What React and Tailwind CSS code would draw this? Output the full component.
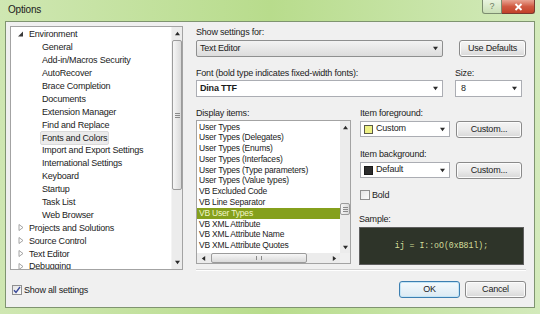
import React from 'react'

const treeItems = [
  { label: 'Environment', level: 0, open: true },
  { label: 'General', level: 1 },
  { label: 'Add-in/Macros Security', level: 1 },
  { label: 'AutoRecover', level: 1 },
  { label: 'Brace Completion', level: 1 },
  { label: 'Documents', level: 1 },
  { label: 'Extension Manager', level: 1 },
  { label: 'Find and Replace', level: 1 },
  { label: 'Fonts and Colors', level: 1, selected: true },
  { label: 'Import and Export Settings', level: 1 },
  { label: 'International Settings', level: 1 },
  { label: 'Keyboard', level: 1 },
  { label: 'Startup', level: 1 },
  { label: 'Task List', level: 1 },
  { label: 'Web Browser', level: 1 },
  { label: 'Projects and Solutions', level: 0 },
  { label: 'Source Control', level: 0 },
  { label: 'Text Editor', level: 0 },
  { label: 'Debugging', level: 0 },
]

const displayItems = [
  'User Types',
  'User Types (Delegates)',
  'User Types (Enums)',
  'User Types (Interfaces)',
  'User Types (Type parameters)',
  'User Types (Value types)',
  'VB Excluded Code',
  'VB Line Separator',
  'VB User Types',
  'VB XML Attribute',
  'VB XML Attribute Name',
  'VB XML Attribute Quotes',
]

const Arrow = ({ dir = 'down', size = 5, color = '#2b2b2b' }) => {
  const pts = {
    down: '0,1 6,1 3,5',
    up: '0,5 6,5 3,1',
    left: '5,0 5,6 1,3',
    right: '1,0 1,6 5,3',
  }
  return (
    <svg width={size} height={size} viewBox="0 0 6 6">
      <polygon points={pts[dir]} fill={color} />
    </svg>
  )
}

const Expander = ({ open }) =>
  open ? (
    <svg width="6" height="6" viewBox="0 0 6 6">
      <polygon points="5,0.5 5,5.5 0,5.5" fill="#3a3a3a" />
    </svg>
  ) : (
    <svg width="6" height="7" viewBox="0 0 6 7">
      <polygon points="1,0.5 5,3.5 1,6.5" fill="none" stroke="#9a9a9a" strokeWidth="0.9" />
    </svg>
  )

const Thumb = ({ className = '', horizontal = false }) => (
  <div
    className={`border border-[#9b9b9b] rounded-[2px] flex items-center justify-center ${
      horizontal
        ? 'bg-linear-to-b from-[#f6f6f6] to-[#dadada]'
        : 'bg-linear-to-r from-[#f6f6f6] to-[#dadada]'
    } ${className}`}
  >
    {horizontal ? (
      <div className="w-[6px] h-[4px] border-x border-[#8a8a8a]" />
    ) : (
      <div className="w-[5px] h-[5px] flex flex-col justify-between">
        <div className="h-px bg-[#8a8a8a]" />
        <div className="h-px bg-[#8a8a8a]" />
        <div className="h-px bg-[#8a8a8a]" />
      </div>
    )}
  </div>
)

const Button = ({ children, width, focused = false }) => (
  <div
    className={`h-[17px] ${width} rounded-[3px] border flex items-center justify-center text-[#1b1b1b] ${
      focused
        ? 'border-[#3c7fb1] bg-linear-to-b from-[#f4fafd] to-[#dbeaf3] shadow-[inset_0_0_0_1px_#c4e5f6]'
        : 'border-[#8a8a8a] bg-linear-to-b from-[#f4f4f4] via-[#ebebeb] to-[#d8d8d8] shadow-[inset_0_0_0_1px_#fcfcfc]'
    }`}
  >
    {children}
  </div>
)

const Combo = ({ children, width, height = 'h-[17px]', plain = false }) => (
  <div
    className={`${height} ${width} border flex items-center justify-between pl-[3px] pr-[4px] ${
      plain
        ? 'border-[#abadb3] bg-white'
        : 'border-[#8e8f8f] rounded-[2px] bg-linear-to-b from-[#f3f3f3] to-[#dcdcdc]'
    }`}
  >
    <div className="flex items-center gap-[3px] text-[#1b1b1b]">{children}</div>
    <Arrow dir="down" />
  </div>
)

const CheckBox = ({ checked }) => (
  <div className="w-[10px] h-[10px] border border-[#8f8f8f] bg-linear-to-br from-[#e4e4e4] to-[#fbfbfb] flex items-center justify-center">
    {checked && (
      <svg width="8" height="8" viewBox="0 0 8 8">
        <path d="M1 4.2 L3 6.5 L7 1" fill="none" stroke="#3a4a9a" strokeWidth="1.4" />
      </svg>
    )}
  </div>
)

export default function App() {
  return (
    <div className="w-[540px] h-[314px] flex flex-col overflow-hidden bg-linear-to-r from-[#cfe7b2] via-[#b8dc8c] to-[#d3eabb] font-['Liberation_Sans',Arial,sans-serif] text-[9px] tracking-[-0.2px] text-[#1b1b1b]">
      {/* title bar */}
      <div className="h-[21px] flex items-start justify-between pl-[8px] pr-[5px]">
        <div className="pt-[4px] leading-[12px] text-[10px] text-[#1a1a1a]">Options</div>
        <div className="flex">
          <div className="w-[20px] h-[14px] rounded-bl-[3px] border border-t-0 border-[#7c8c70] bg-linear-to-b from-[#e9f3df] to-[#c9dfb6] flex items-center justify-center text-[#6c7a62] text-[9px]">
            ?
          </div>
          <div className="w-[33px] h-[14px] rounded-br-[3px] border border-t-0 border-l-0 border-[#7a3a30] bg-linear-to-b from-[#e8a493] via-[#d05a42] to-[#c24128] flex items-center justify-center">
            <svg width="9" height="8" viewBox="0 0 9 8">
              <path d="M1.5 1 L7.5 7 M7.5 1 L1.5 7" stroke="white" strokeWidth="1.8" />
            </svg>
          </div>
        </div>
      </div>

      {/* client area */}
      <div className="mx-[5px] h-[287px] border border-[#7f9470] bg-[#f0f0f0] pt-[4px] pl-[4px] pr-[8px]">
        <div className="flex h-[244px]">
          {/* tree */}
          <div className="w-[173px] h-full border border-[#a3a3a3] bg-white flex">
            <div className="flex-1 overflow-hidden pt-[1px]">
              {treeItems.map((item) => (
                <div
                  key={item.label}
                  className={`h-[12.9px] flex items-center whitespace-nowrap ${
                    item.level === 0 ? 'pl-[7px]' : 'pl-[31px]'
                  }`}
                >
                  {item.level === 0 && (
                    <div className="w-[6px] mr-[5px] flex items-center">
                      <Expander open={item.open} />
                    </div>
                  )}
                  <span
                    className={`leading-[12px] ${
                      item.selected ? 'bg-[#ebebeb] border border-[#dadada] rounded-[2px] -ml-[2px] px-[1px]' : ''
                    }`}
                  >
                    {item.label}
                  </span>
                </div>
              ))}
            </div>
            <div className="w-[11px] h-full bg-[#ececec] flex flex-col border-l border-[#f4f4f4]">
              <div className="h-[13px] flex items-center justify-center">
                <Arrow dir="up" />
              </div>
              <Thumb className="h-[150px]" />
              <div className="flex-1" />
              <div className="h-[13px] flex items-center justify-center">
                <Arrow dir="down" />
              </div>
            </div>
          </div>

          {/* right side */}
          <div className="ml-[13px] w-[330px] flex flex-col">
            <div className="h-[12px] leading-[12px]">Show settings for:</div>
            <div className="mt-[2px] flex justify-between">
              <Combo width="w-[247px]">Text Editor</Combo>
              <Button width="w-[67px]">Use Defaults</Button>
            </div>
            <div className="mt-[10px] h-[12px] leading-[12px] flex">
              <div className="w-[259px]">Font (bold type indicates fixed-width fonts):</div>
              <div>Size:</div>
            </div>
            <div className="mt-[1px] flex">
              <Combo width="w-[247px]" plain>
                <span className="font-bold">Dina TTF</span>
              </Combo>
              <div className="ml-[12px]">
                <Combo width="w-[67px]" plain>
                  <span className="pl-[2px]">8</span>
                </Combo>
              </div>
            </div>

            <div className="mt-[10px] flex">
              {/* display items */}
              <div className="w-[155px] flex flex-col">
                <div className="h-[12px] leading-[12px]">Display items:</div>
                <div className="mt-[1px] h-[144px] border border-[#a3a3a3] bg-white flex flex-col">
                  <div className="h-[132px] flex">
                    <div className="flex-1 overflow-hidden text-[8.5px] pt-[0.5px]">
                      {displayItems.map((d) => (
                        <div
                          key={d}
                          className={`h-[10.8px] leading-[10.8px] pl-[2px] whitespace-nowrap ${
                            d === 'VB User Types' ? 'bg-[#85a01c] text-[#f2f6c8]' : ''
                          }`}
                        >
                          {d}
                        </div>
                      ))}
                    </div>
                    <div className="w-[10px] h-full bg-[#ececec] flex flex-col">
                      <div className="h-[12px] flex items-center justify-center">
                        <Arrow dir="up" />
                      </div>
                      <div className="h-[70px]" />
                      <Thumb className="h-[12px]" />
                      <div className="flex-1" />
                      <div className="h-[12px] flex items-center justify-center">
                        <Arrow dir="down" />
                      </div>
                    </div>
                  </div>
                  <div className="h-[10px] flex">
                    <div className="flex-1 bg-[#ececec] flex">
                      <div className="w-[12px] flex items-center justify-center">
                        <Arrow dir="left" />
                      </div>
                      <div className="w-[2px]" />
                      <Thumb horizontal className="w-[96px] h-full" />
                      <div className="flex-1" />
                      <div className="w-[12px] flex items-center justify-center">
                        <Arrow dir="right" />
                      </div>
                    </div>
                    <div className="w-[10px] bg-[#f0f0f0]" />
                  </div>
                </div>
              </div>

              {/* item properties */}
              <div className="ml-[8px] w-[167px] flex flex-col">
                <div className="h-[12px] leading-[12px] pl-[1px]">Item foreground:</div>
                <div className="mt-[2px] flex pl-[1px]">
                  <Combo width="w-[90px]" height="h-[16px]" plain>
                    <div className="w-[9px] h-[9px] border border-[#5a5a4a] bg-[#eef184]" />
                    <span>Custom</span>
                  </Combo>
                  <div className="ml-[6px]">
                    <Button width="w-[66px]">Custom...</Button>
                  </div>
                </div>
                <div className="mt-[10px] h-[12px] leading-[12px] pl-[1px]">Item background:</div>
                <div className="mt-[2px] flex pl-[1px]">
                  <Combo width="w-[90px]" height="h-[16px]" plain>
                    <div className="w-[9px] h-[9px] border border-[#1a1a1a] bg-[#2c2c2c]" />
                    <span>Default</span>
                  </Combo>
                  <div className="ml-[6px]">
                    <Button width="w-[66px]">Custom...</Button>
                  </div>
                </div>
                <div className="mt-[11px] h-[10px] flex items-center gap-[2px] pl-[1px]">
                  <CheckBox />
                  <span className="leading-[10px]">Bold</span>
                </div>
                <div className="mt-[13px] h-[12px] leading-[12px]">Sample:</div>
                <div className="mt-[2px] h-[38px] w-[165px] border border-[#5e5e5e] bg-[#2e3429] flex items-center justify-center font-['Liberation_Mono',monospace] text-[8.2px] tracking-normal text-[#d3de9a]">
                  ij = I::oO(0xB81l);
                </div>
              </div>
            </div>

            <div className="mt-[4px] h-[2px] border-t border-[#d2d2d2] border-b border-b-white" />
          </div>
        </div>

        {/* bottom row */}
        <div className="mt-[11px] h-[17px] flex items-center justify-between">
          <div className="ml-[2px] flex items-center gap-[2px]">
            <CheckBox checked />
            <span className="leading-[10px]">Show all settings</span>
          </div>
          <div className="flex gap-[5px]">
            <Button width="w-[61px]" focused>
              OK
            </Button>
            <Button width="w-[61px]">Cancel</Button>
          </div>
        </div>
      </div>
    </div>
  )
}
